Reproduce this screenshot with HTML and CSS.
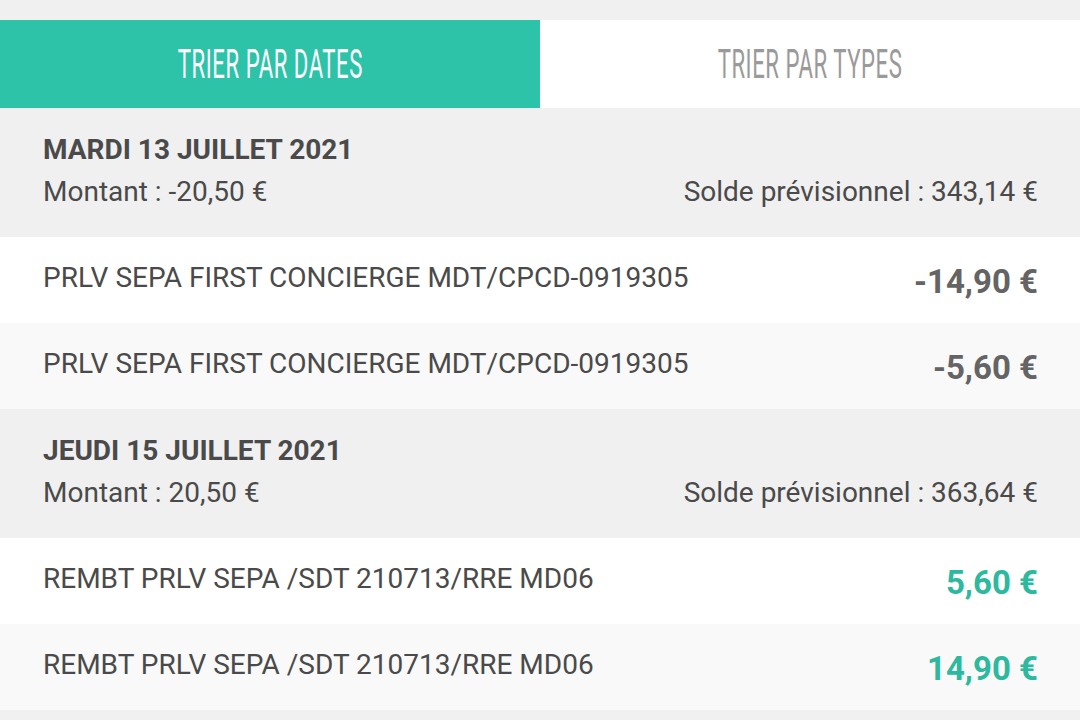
FILE: index.html
```html
<!DOCTYPE html>
<html lang="fr">
<head>
<meta charset="utf-8">
<title>Opérations</title>
<link rel="stylesheet" href="styles.css">
</head>
<body>
<div class="page">
  <div class="tabs">
    <div class="tab tab-active"><span class="tab-label">TRIER PAR DATES</span></div>
    <div class="tab"><span class="tab-label">TRIER PAR TYPES</span></div>
  </div>

  <div class="day">
    <div class="day-title">MARDI 13 JUILLET 2021</div>
    <div class="day-info">
      <span>Montant : -20,50 €</span>
      <span>Solde prévisionnel : 343,14 €</span>
    </div>
  </div>
  <div class="op">
    <span class="op-label">PRLV SEPA FIRST CONCIERGE MDT/CPCD-0919305</span>
    <span class="op-amount">-14,90 €</span>
  </div>
  <div class="op op-alt">
    <span class="op-label">PRLV SEPA FIRST CONCIERGE MDT/CPCD-0919305</span>
    <span class="op-amount">-5,60 €</span>
  </div>

  <div class="day">
    <div class="day-title">JEUDI 15 JUILLET 2021</div>
    <div class="day-info">
      <span>Montant : 20,50 €</span>
      <span>Solde prévisionnel : 363,64 €</span>
    </div>
  </div>
  <div class="op">
    <span class="op-label">REMBT PRLV SEPA /SDT 210713/RRE MD06</span>
    <span class="op-amount positive">5,60 €</span>
  </div>
  <div class="op op-alt">
    <span class="op-label">REMBT PRLV SEPA /SDT 210713/RRE MD06</span>
    <span class="op-amount positive">14,90 €</span>
  </div>
</div>
</body>
</html>
```

FILE: styles.css
```css
html, body {
  margin: 0;
  padding: 0;
  background: #f0f0f0;
  font-family: Roboto, "Noto Sans", sans-serif;
  color: #4a4a4a;
}

.page {
  padding-top: 20px;
  width: 1080px;
  height: 720px;
  overflow: hidden;
  box-sizing: border-box;
}

.tabs {
  display: flex;
  height: 88px;
}

.tab {
  flex: 1;
  display: flex;
  align-items: center;
  justify-content: center;
  background: #ffffff;
  color: #9a9a9a;
}

.tab-active {
  background: #2cc3a8;
  color: #ffffff;
}

.tab-label {
  display: inline-block;
  font-size: 41px;
  font-weight: 400;
  line-height: 1;
  transform: scaleX(0.54);
  white-space: nowrap;
  letter-spacing: 1px;
}

.day {
  height: 129px;
  box-sizing: border-box;
  padding: 25px 42px 0 43px;
  background: #f0f0f0;
}

.day-title {
  font-size: 28px;
  font-weight: 700;
  line-height: 34px;
  color: #4a4a4a;
}

.day-info {
  display: flex;
  justify-content: space-between;
  font-size: 28px;
  line-height: 34px;
  margin-top: 8px;
}

.op {
  height: 86px;
  box-sizing: border-box;
  padding: 0 42px 0 43px;
  display: flex;
  align-items: center;
  justify-content: space-between;
  background: #ffffff;
}

.op-alt {
  background: #f9f9f9;
}

.op-label {
  font-size: 28px;
  line-height: 34px;
  margin-top: -4px;
}

.op-amount {
  font-size: 33px;
  font-weight: 700;
  color: #646464;
  line-height: 34px;
  margin-top: 4px;
}

.positive {
  color: #2db9a0;
}
```
